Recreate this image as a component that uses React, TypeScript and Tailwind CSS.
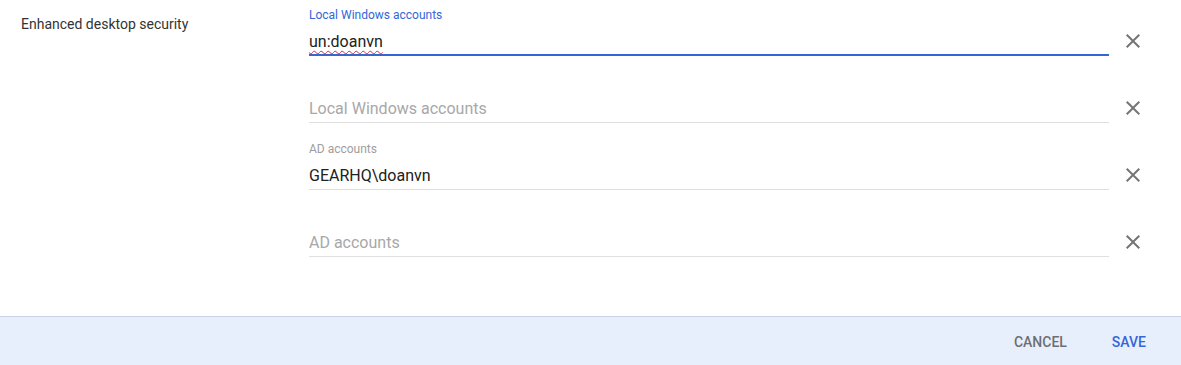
import React from 'react';

type Field = {
  label: string;
  value?: string;
  focused?: boolean;
  misspelled?: boolean;
  gap: string;
};

const fields: Field[] = [
  { label: 'Local Windows accounts', value: 'un:doanvn', focused: true, misspelled: true, gap: 'mt-0' },
  { label: 'Local Windows accounts', gap: 'mt-[18px]' },
  { label: 'AD accounts', value: 'GEARHQ\\doanvn', gap: 'mt-[18px]' },
  { label: 'AD accounts', gap: 'mt-[18px]' },
];

const CloseIcon = () => (
  <svg width="24" height="24" viewBox="0 0 24 24" className="fill-[#757575]">
    <path d="M19 6.41L17.59 5 12 10.59 6.41 5 5 6.41 10.59 12 5 17.59 6.41 19 12 13.41 17.59 19 19 17.59 13.41 12z" />
  </svg>
);

const AccountField = ({ label, value, focused, misspelled, gap }: Field) => {
  const filled = value !== undefined;
  return (
    <div className={`flex items-start ${gap}`}>
      <div className="w-[800px]">
        <div
          className={`h-4 text-[12px] leading-4 ${focused ? 'text-[#3367d6]' : 'text-[#9e9e9e]'}`}
        >
          {filled ? label : ''}
        </div>
        <div
          className={`mt-[7px] h-[26px] ${
            focused ? 'border-b-2 border-[#3367d6]' : 'pb-px border-b border-[#e0e0e0]'
          }`}
        >
          <div className="h-6 text-[16px] leading-6">
            {filled ? (
              <span
                className={
                  misspelled
                    ? 'text-[#212121] underline decoration-wavy decoration-[#e8262b] decoration-1 underline-offset-[3px]'
                    : 'text-[#212121]'
                }
              >
                {value}
              </span>
            ) : (
              <span className="text-[#a8a8a8]">{label}</span>
            )}
          </div>
        </div>
      </div>
      <button className="ml-3 mt-[22px] flex h-6 w-6 items-center justify-center">
        <CloseIcon />
      </button>
    </div>
  );
};

export default function App() {
  return (
    <div className="w-[1181px] h-[365px] bg-white font-['Roboto','Liberation_Sans',sans-serif] flex flex-col">
      <div className="flex h-[316px]">
        <div className="w-[309px] pl-[21px] pt-[14px] text-[14px] leading-5 text-[#333333]">
          Enhanced desktop security
        </div>
        <div className="pt-[7px]">
          {fields.map((f, i) => (
            <AccountField key={i} {...f} />
          ))}
        </div>
      </div>
      <div className="flex h-[49px] items-center justify-end gap-[13px] border-t border-[#cad4e4] bg-[#e8effc] pr-[19px] pt-[3px]">
        <button className="h-9 px-4 text-[14px] font-medium uppercase text-[#6b6f74]">
          Cancel
        </button>
        <button className="h-9 px-4 text-[14px] font-medium uppercase text-[#3367d6]">
          Save
        </button>
      </div>
    </div>
  );
}
